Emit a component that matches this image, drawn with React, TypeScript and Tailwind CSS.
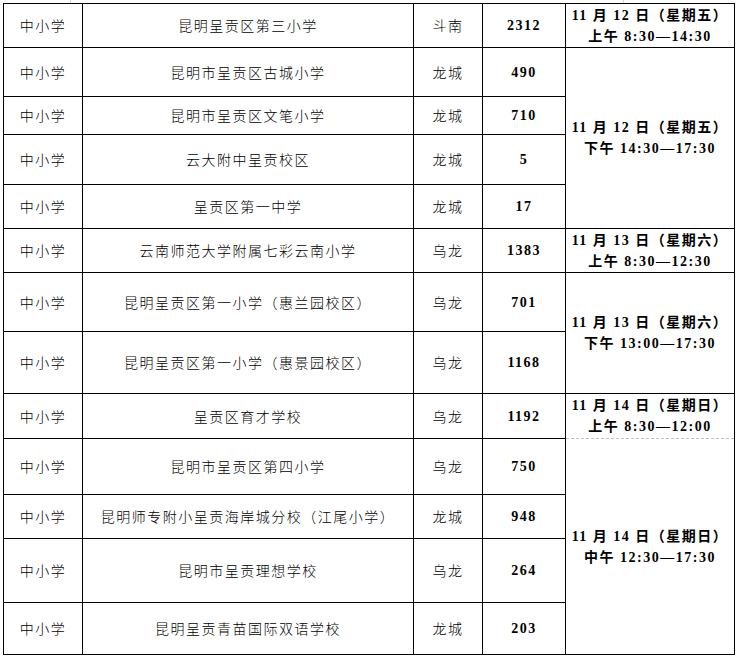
import { Fragment } from 'react'

type Row = {
  type: string
  school: string
  area: string
  count: string
  date?: { day: string; time: string; span: number; dashed?: boolean }
}

const rows: Row[] = [
  { type: '中小学', school: '昆明呈贡区第三小学', area: '斗南', count: '2312', date: { day: '11 月 12 日（星期五）', time: '上午 8:30—14:30', span: 1 } },
  { type: '中小学', school: '昆明市呈贡区古城小学', area: '龙城', count: '490', date: { day: '11 月 12 日（星期五）', time: '下午 14:30—17:30', span: 4 } },
  { type: '中小学', school: '昆明市呈贡区文笔小学', area: '龙城', count: '710' },
  { type: '中小学', school: '云大附中呈贡校区', area: '龙城', count: '5' },
  { type: '中小学', school: '呈贡区第一中学', area: '龙城', count: '17' },
  { type: '中小学', school: '云南师范大学附属七彩云南小学', area: '乌龙', count: '1383', date: { day: '11 月 13 日（星期六）', time: '上午 8:30—12:30', span: 1 } },
  { type: '中小学', school: '昆明呈贡区第一小学（惠兰园校区）', area: '乌龙', count: '701', date: { day: '11 月 13 日（星期六）', time: '下午 13:00—17:30', span: 2 } },
  { type: '中小学', school: '昆明呈贡区第一小学（惠景园校区）', area: '乌龙', count: '1168' },
  { type: '中小学', school: '呈贡区育才学校', area: '乌龙', count: '1192', date: { day: '11 月 14 日（星期日）', time: '上午 8:30—12:00', span: 1, dashed: true } },
  { type: '中小学', school: '昆明市呈贡区第四小学', area: '乌龙', count: '750', date: { day: '11 月 14 日（星期日）', time: '中午 12:30—17:30', span: 4 } },
  { type: '中小学', school: '昆明师专附小呈贡海岸城分校（江尾小学）', area: '龙城', count: '948' },
  { type: '中小学', school: '昆明市呈贡理想学校', area: '乌龙', count: '264' },
  { type: '中小学', school: '昆明呈贡青苗国际双语学校', area: '龙城', count: '203' },
]

const spanClass: Record<number, string> = {
  1: 'row-span-1',
  2: 'row-span-2',
  4: 'row-span-4',
}

const cell = 'border-r border-b border-black flex items-center justify-center'
const cjk = "font-['Noto_Sans_CJK_SC',sans-serif] font-light text-[14px] tracking-[1.5px] text-black"
const bold = "font-['Liberation_Serif','Noto_Sans_CJK_SC',serif] font-bold text-[14px] tracking-[1.5px] text-black"

export default function App() {
  return (
    <div className="w-[738px] h-[659px] bg-white overflow-hidden">
      {/* faint marks above the table */}
      <div className="h-[3px] flex">
        <div className="ml-[70px] w-px h-full bg-gray-300" />
        <div className="ml-[552px] w-px h-full bg-gray-300" />
      </div>
      <div className="ml-[3px] w-[732px] border-l border-t border-black grid grid-cols-[79px_331px_69px_83px_169px] grid-rows-[44px_49px_38px_50px_44px_44px_59px_62px_45px_56px_44px_64px_52px]">
        {rows.map((r, i) => (
          <Fragment key={i}>
            <div className={`${cell} ${cjk}`}>{r.type}</div>
            <div className={`${cell} ${cjk}`}>{r.school}</div>
            <div className={`${cell} ${cjk}`}>{r.area}</div>
            <div className={`${cell} ${bold}`}>{r.count}</div>
            {r.date && (
              <div
                className={`col-start-5 ${spanClass[r.date.span]} border-r border-black flex flex-col ${r.date.dashed ? '' : 'border-b'}`}
              >
                <div className={`flex-1 flex flex-col items-center justify-center leading-[21px] ${bold}`}>
                  <span>{r.date.day}</span>
                  <span>{r.date.time}</span>
                </div>
                {r.date.dashed && <div className="border-b border-dashed border-[#c0c0c0]" />}
              </div>
            )}
          </Fragment>
        ))}
      </div>
    </div>
  )
}
